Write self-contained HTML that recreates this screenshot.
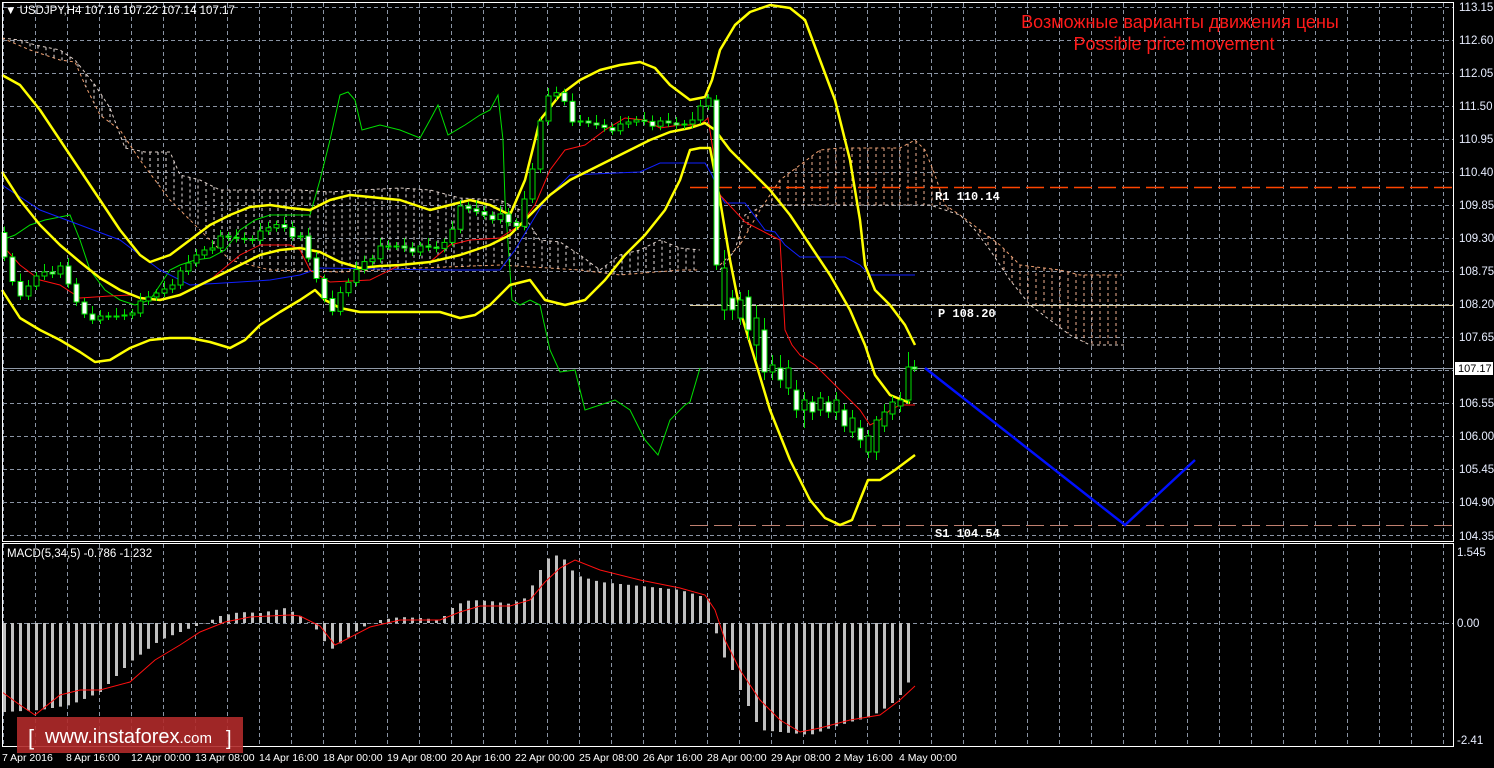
<!DOCTYPE html>
<html><head><meta charset="utf-8"><style>
html,body{margin:0;padding:0;background:#000;overflow:hidden}
svg{display:block}
text{font-family:"Liberation Sans",sans-serif}
</style></head><body>
<svg id="s" width="1494" height="768" viewBox="0 0 1494 768" xmlns="http://www.w3.org/2000/svg">
<rect width="1494" height="768" fill="#000"/>
<g id="grid" stroke="#8a94a4" stroke-width="1" stroke-dasharray="4,3"></g>
<g id="cloud" fill="none" stroke-width="1" stroke-dasharray="3,3"></g>
<g id="lines" fill="none"></g>
<g id="candles"></g>
<g id="macd"></g>
<rect x="2.5" y="2.5" width="1451" height="539" fill="none" stroke="#fff"/>
<rect x="2.5" y="543.5" width="1451" height="203" fill="none" stroke="#fff"/>
<g font-size="11.5" fill="#e8eeff">
<text x="1459" y="11">113.15</text><text x="1459" y="44">112.60</text><text x="1459" y="77">112.05</text><text x="1459" y="110">111.50</text><text x="1459" y="143">110.95</text><text x="1459" y="176">110.40</text><text x="1459" y="209">109.85</text><text x="1459" y="242">109.30</text><text x="1459" y="275">108.75</text><text x="1459" y="308">108.20</text><text x="1459" y="341">107.65</text><text x="1459" y="407">106.55</text><text x="1459" y="440">106.00</text><text x="1459" y="473">105.45</text><text x="1459" y="506">104.90</text><text x="1459" y="540">104.35</text>
<text x="1457" y="556">1.545</text><text x="1457" y="627">0.00</text><text x="1457" y="744">-2.41</text>
</g>
<rect x="1455" y="362" width="38" height="13" fill="#fff"/>
<text x="1458" y="372" font-size="11" fill="#000">107.17</text>
<g font-size="11.5" fill="#fff">
<text x="5" y="14">▼ USDJPY,H4  107.16 107.22 107.14 107.17</text>
<text x="7" y="557">MACD(5,34,5) -0.786 -1.232</text>
</g>
<g font-size="10.5" fill="#fff">
<text x="2" y="761">7 Apr 2016</text><text x="66" y="761">8 Apr 16:00</text><text x="131" y="761">12 Apr 00:00</text><text x="195" y="761">13 Apr 08:00</text><text x="259" y="761">14 Apr 16:00</text><text x="323" y="761">18 Apr 00:00</text><text x="387" y="761">19 Apr 08:00</text><text x="451" y="761">20 Apr 16:00</text><text x="515" y="761">22 Apr 00:00</text><text x="579" y="761">25 Apr 08:00</text><text x="643" y="761">26 Apr 16:00</text><text x="707" y="761">28 Apr 00:00</text><text x="771" y="761">29 Apr 08:00</text><text x="835" y="761">2 May 16:00</text><text x="899" y="761">4 May 00:00</text>
</g>
<g font-weight="bold" font-size="12" fill="#fff">
<text x="935" y="200" style="font-family:'Liberation Mono',monospace">R1 110.14</text>
<text x="938" y="317" style="font-family:'Liberation Mono',monospace">P 108.20</text>
<text x="935" y="537" style="font-family:'Liberation Mono',monospace">S1 104.54</text>
</g>
<g font-size="18" fill="#ff1a1a" text-anchor="middle">
<text x="1180" y="28">Возможные варианты движения цены</text>
<text x="1174" y="50">Possible price movement</text>
</g>
<polyline points="925,368 1125,525 1195,460" fill="none" stroke="#0010ff" stroke-width="2.5"/>
<rect x="17" y="717" width="226" height="36" fill="#b02a2a" fill-opacity="0.9"/>
<text x="28" y="745" font-size="22" fill="#fff">[</text>
<text x="45" y="743" font-size="20" fill="#fff">www.instaforex<tspan font-size="15">.com</tspan></text>
<text x="226" y="745" font-size="20" fill="#fff">]</text>
</svg>
<script>
var NS="http://www.w3.org/2000/svg";
function el(p,t,a){var e=document.createElementNS(NS,t);for(var k in a)e.setAttribute(k,a[k]);document.getElementById(p).appendChild(e);return e;}
for(var x=3;x<1454;x+=32){el("grid","line",{x1:x+.5,y1:3,x2:x+.5,y2:541});el("grid","line",{x1:x+.5,y1:544,x2:x+.5,y2:746});}
for(var y=7;y<540;y+=33){el("grid","line",{x1:3,y1:y+.5,x2:1453,y2:y+.5});}
el("grid","line",{x1:3,y1:623.5,x2:1453,y2:623.5});
function P(a){var s="";for(var i=0;i<a.length;i+=2)s+=a[i]+","+a[i+1]+" ";return s;}
function interp(a,x){for(var i=0;i<a.length-2;i+=2){if(x<=a[i+2]){var t=(x-a[i])/(a[i+2]-a[i]||1);return a[i+1]+(a[i+3]-a[i+1])*t;}}return a[a.length-1];}
var cA=[2,38,20,40,35,45,60,50,75,60,95,85,110,108,125,148,145,152,170,152,180,175,200,180,220,190,300,190,330,192,360,190,400,188,430,190,460,198,500,200,520,210,540,240,560,242,580,255,600,270,620,255,640,250,660,240,680,248,700,250];
var cB=[2,38,30,50,60,60,75,62,85,85,100,115,120,130,140,160,170,200,200,230,230,260,270,270,340,272,420,268,500,265,580,270,620,275,680,270,700,270];
var rA=[720,265,740,245,760,210,780,180,800,165,820,150,840,148,900,148,915,140,925,150,935,175,945,205,960,215,980,230,1000,245,1020,265,1060,270,1080,275,1122,275];
var rB=[720,270,735,250,745,215,765,205,930,205,960,215,975,230,990,250,1010,280,1030,305,1050,320,1070,335,1090,345,1125,345];
el("cloud","polyline",{points:P(cA),stroke:"#e0d0c8"});el("cloud","polyline",{points:P(cB),stroke:"#f0a070"});
el("cloud","polyline",{points:P(rA),stroke:"#f0a070"});el("cloud","polyline",{points:P(rB),stroke:"#e0d0c8"});
for(var x=6;x<700;x+=8){var a=interp(cA,x),b=interp(cB,x);if(Math.abs(a-b)>3)el("cloud","line",{x1:x,y1:a,x2:x,y2:b,stroke:"#e8e0e0"});}
for(var x=724;x<1122;x+=8){var a=interp(rA,x),b=interp(rB,x);if(Math.abs(a-b)>3)el("cloud","line",{x1:x,y1:a,x2:x,y2:b,stroke:"#f0b090"});}
el("lines","line",{x1:690,y1:187.5,x2:1453,y2:187.5,stroke:"#ff4500","stroke-dasharray":"18,6","stroke-width":1.5});
el("lines","line",{x1:690,y1:305.5,x2:1453,y2:305.5,stroke:"#e0d0a0"});
el("lines","line",{x1:690,y1:525.5,x2:1453,y2:525.5,stroke:"#c08070","stroke-dasharray":"18,6"});
el("lines","line",{x1:3,y1:368.5,x2:1453,y2:368.5,stroke:"#909aa8"});
var green=[2,240,15,235,30,225,45,220,60,217,70,215,80,240,90,270,105,290,120,300,135,305,150,300,160,285,170,270,180,265,195,260,210,258,225,250,240,230,255,220,270,215,310,215,320,180,330,140,340,95,348,92,355,100,362,130,380,125,400,130,420,138,430,120,438,105,448,135,465,125,480,115,490,110,498,95,503,140,505,200,512,300,520,305,530,300,540,305,550,350,560,372,575,370,585,410,600,405,615,400,630,410,645,440,658,455,670,420,685,405,690,402,700,368];
var blue=[2,185,40,210,80,225,120,240,140,255,160,270,190,285,240,282,270,280,300,275,320,268,440,270,500,270,515,250,530,225,545,200,570,175,640,172,660,163,705,163,712,175,720,195,725,203,745,203,765,230,775,232,785,245,800,257,845,257,860,265,870,275,915,275];
var red=[2,245,20,265,40,280,60,285,80,298,110,296,130,295,150,300,170,298,190,290,210,280,240,255,260,245,290,245,300,250,310,270,330,282,370,280,400,265,430,262,450,245,470,240,500,238,520,225,535,205,550,170,565,150,585,145,605,130,625,118,645,120,660,128,680,125,700,125,708,118,713,150,716,180,720,195,745,222,770,235,780,240,785,330,792,345,800,355,815,365,830,380,845,395,860,410,870,425,880,420,890,410,900,405,915,405];
el("lines","polyline",{points:P(green),stroke:"#00e000"});
el("lines","polyline",{points:P(blue),stroke:"#1020ff"});
el("lines","polyline",{points:P(red),stroke:"#ff1010"});
var up=[2,75,20,85,40,110,60,140,80,170,100,200,120,230,140,255,150,262,170,255,190,240,210,225,230,215,250,207,270,205,290,208,310,210,330,200,350,195,370,197,400,200,430,210,450,205,470,200,490,205,510,215,525,180,540,120,560,95,580,80,600,70,620,65,640,62,655,68,670,85,690,100,705,97,712,80,720,50,735,25,750,12,770,5,790,8,805,20,820,60,835,100,850,160,860,220,865,265,875,290,890,305,905,325,915,345];
var mid=[2,172,20,200,40,225,60,245,80,262,100,278,120,290,140,298,160,300,180,295,200,285,220,275,240,265,260,255,280,250,300,248,320,252,340,262,360,268,380,266,400,265,430,262,460,255,490,245,510,235,530,215,550,195,570,180,590,170,610,160,630,150,650,140,670,132,690,128,705,123,715,130,730,150,750,170,770,190,790,215,810,245,830,275,850,310,865,345,875,375,890,395,910,403];
var lo=[2,290,20,318,40,330,60,340,80,352,95,362,110,360,130,348,150,340,170,338,190,338,210,342,230,348,245,340,260,325,280,312,300,300,315,290,325,300,340,308,360,312,440,312,460,318,475,315,490,305,510,285,530,280,545,300,565,305,585,300,605,280,625,255,645,235,665,210,680,180,690,150,700,148,710,148,720,200,730,260,740,310,755,360,770,410,790,460,810,500,825,518,840,525,852,520,860,500,868,480,880,480,895,470,915,455];
[up,mid,lo].forEach(function(a){el("lines","polyline",{points:P(a),stroke:"#ffff00","stroke-width":2.5,"stroke-linejoin":"round"});});
var cy=[4,255,20,300,40,270,60,270,80,310,100,320,120,315,140,305,160,290,180,275,200,250,220,240,240,238,260,235,280,222,300,240,310,265,330,310,345,290,360,262,380,250,400,245,420,250,440,248,460,210,480,212,500,218,515,230,530,175,545,100,560,90,575,125,600,125,620,128,640,118,660,125,680,125,700,110,708,100];
var prev=interp(cy,-4);
for(var x=4;x<=708;x+=8){var c=interp(cy,x)+((x*7)%5-2)*2;var o=prev;var t=Math.min(o,c)-4-(x%3)*2,b=Math.max(o,c)+4+(x%4);
el("candles","line",{x1:x+.5,y1:t,x2:x+.5,y2:b,stroke:"#00e000"});
el("candles","rect",{x:x-2,y:Math.min(o,c),width:5,height:Math.max(1,Math.abs(o-c)),fill:c>o?"#fff":"#000",stroke:"#00e000"});prev=c;}
var rc=[[716,100,265,95,270],[724,268,310,250,320],[732,298,310,290,320],[740,300,318,292,325],[748,297,330,290,340],[756,318,345,305,360],[764,330,372,318,380],[772,365,372,355,380],[780,368,380,355,388],[788,368,388,360,395],[796,390,410,380,418],[804,400,410,392,428],[812,402,412,396,420],[820,398,410,392,416],[828,402,412,396,418],[836,400,412,392,420],[844,410,426,404,432],[852,418,432,410,438],[860,428,440,420,448],[868,436,452,430,458],[876,420,452,416,460],[884,412,426,404,432],[892,402,414,396,420],[900,400,406,392,412],[908,367,400,352,404],[914,367,369,360,372]];
rc.forEach(function(r){el("candles","line",{x1:r[0]+.5,y1:r[3],x2:r[0]+.5,y2:r[4],stroke:"#00e000"});el("candles","rect",{x:r[0]-2,y:r[1],width:5,height:r[2]-r[1],fill:(r[0]%16==4||r[0]>870&&r[0]<910)?"#000":"#fff",stroke:"#00e000"});});
var mb=[4,712,40,710,70,705,100,692,130,662,160,640,190,628,205,623,220,616,240,612,260,613,285,608,300,616,315,628,330,650,345,640,360,628,380,620,400,617,420,618,440,620,455,605,470,600,490,601,510,604,525,598,535,580,545,560,555,555,565,560,575,575,600,582,640,586,680,590,700,596,712,600,718,650,730,665,740,690,760,730,790,733,810,735,830,728,850,722,870,717,890,705,905,690,915,665];
for(var x=4;x<=915;x+=8){var v=interp(mb,x);el("macd","rect",{x:x-1,y:Math.min(v,623),width:3,height:Math.abs(v-623)||1,fill:"#c0c0c0"});}
var sig=[2,692,20,705,35,715,60,695,80,690,100,690,130,682,155,660,180,645,200,632,225,622,250,617,290,615,300,616,320,626,335,645,345,640,370,627,400,620,440,620,460,612,480,606,510,606,530,600,545,582,560,568,575,560,600,570,640,580,680,588,705,595,715,610,725,640,740,670,760,700,780,720,800,732,820,728,850,720,880,715,900,700,915,686];
el("macd","polyline",{points:P(sig),fill:"none",stroke:"#ff1010"});
</script>
</body></html>
